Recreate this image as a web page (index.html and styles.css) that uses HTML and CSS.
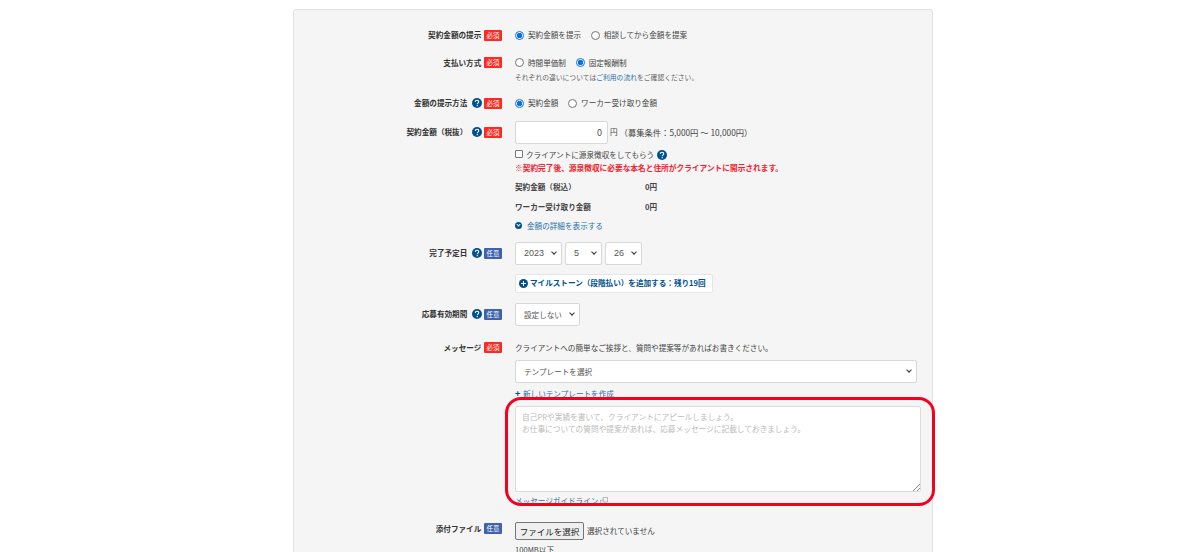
FILE: index.html
```html
<!DOCTYPE html>
<html lang="ja">
<head>
  <meta charset="UTF-8" />
  <title>応募フォーム</title>
  <link rel="stylesheet" href="styles.css">
</head>
<body>
  <svg class="icon-defs" width="0" height="0">
    <symbol id="help" viewBox="0 0 20 20">
      <circle cx="10" cy="10" r="10" fill="#00508f"/>
      <path d="M6.6 7.8C6.7 5.7 8.1 4.6 10.1 4.6c2 0 3.4 1.200 3.400 2.900 0 1.300-.7 2-1.700 2.700-1 .7-1.200 1-1.200 2.100" fill="none" stroke="#fff" stroke-width="2.200"/>
      <circle cx="10.500" cy="15.300" r="1.400" fill="#fff"/>
    </symbol>
  </svg>

  <div id="form-container">
    <div class="row row-first">
      <div class="label">契約金額の提示 <span class="req">必須</span></div>
      <div class="field">
        <label class="radio on">契約金額を提示</label>
        <label class="radio">相談してから金額を提案</label>
      </div>
    </div>

    <div class="row row-pay">
      <div class="label">支払い方式 <span class="req">必須</span></div>
      <div class="field">
        <label class="radio">時間単価制</label>
        <label class="radio on">固定報酬制</label>
        <p class="note">それぞれの違いについては<a href="#">ご利用の流れ</a>をご確認ください。</p>
      </div>
    </div>

    <div class="row row-method">
      <div class="label">金額の提示方法 <svg class="help"><use href="#help"/></svg><span class="req">必須</span></div>
      <div class="field">
        <label class="radio on">契約金額</label>
        <label class="radio">ワーカー受け取り金額</label>
      </div>
    </div>

    <div class="row row-amount">
      <div class="label label-tall">契約金額（税抜） <svg class="help"><use href="#help"/></svg><span class="req">必須</span></div>
      <div class="field">
        <div class="amount-line">
          <div class="amount-input">0</div>
          <span>円</span>
          <span class="range">（募集条件：5,000円 〜 10,000円）</span>
        </div>
        <div class="check-line">
          <span class="checkbox"></span>クライアントに源泉徴収をしてもらう<svg class="help"><use href="#help"/></svg>
        </div>
        <p class="warn">※契約完了後、源泉徴収に必要な本名と住所がクライアントに開示されます。</p>
        <div class="sum-line"><b>契約金額（税込）</b><b>0円</b></div>
        <div class="sum-line sum-next"><b>ワーカー受け取り金額</b><b>0円</b></div>
        <a href="#" class="detail-link"><span class="chev"></span>金額の詳細を表示する</a>
      </div>
    </div>

    <div class="row row-date">
      <div class="label label-tall">完了予定日 <svg class="help"><use href="#help"/></svg><span class="opt">任意</span></div>
      <div class="field">
        <div class="date-line">
          <div class="select num w-year">2023</div>
          <div class="select num w-month">5</div>
          <div class="select num w-day">26</div>
        </div>
        <a href="#" class="milestone"><span class="plus"></span>マイルストーン（段階払い）を追加する：残り19回</a>
      </div>
    </div>

    <div class="row row-limit">
      <div class="label label-tall">応募有効期間 <svg class="help"><use href="#help"/></svg><span class="opt">任意</span></div>
      <div class="field">
        <div class="select w-limit">設定しない</div>
      </div>
    </div>

    <div class="row row-message">
      <div class="label">メッセージ <span class="req">必須</span></div>
      <div class="field">
        <p class="intro">クライアントへの簡単なご挨拶と、質問や提案等があればお書きください。</p>
        <div class="select w-full">テンプレートを選択</div>
        <a href="#" class="new-template"><b>+</b>新しいテンプレートを作成</a>
        <div class="textarea">
          自己PRや実績を書いて、クライアントにアピールしましょう。<br>
          お仕事についての質問や提案があれば、応募メッセージに記載しておきましょう。
          <svg class="grip" viewBox="0 0 8 8"><path d="M8 1L1 8M8 5L5 8" stroke="#888" stroke-width="1"/></svg>
        </div>
        <a href="#" class="guide">メッセージガイドライン<svg class="ext" viewBox="0 0 9 9"><path d="M3.500.5h5v5h-5zM.5 3.500h3M.5 3.500v5h5v-3" fill="none" stroke="#aaa"/></svg></a>
      </div>
    </div>

    <div class="row row-file">
      <div class="label label-file">添付ファイル <span class="opt">任意</span></div>
      <div class="field">
        <div class="file-line"><span class="file-btn">ファイルを選択</span>選択されていません</div>
        <p class="file-note">100MB以下</p>
      </div>
    </div>

    <div class="highlight"></div>
  </div>
</body>
</html>
```

FILE: styles.css
```css
html, body {
  height: 552px;
  overflow: hidden;
}

body {
  margin: 0;
  position: relative;
  background-color: #ffffff;
  color: #444;
  font-family: "Noto Sans CJK JP", "Liberation Sans", sans-serif;
  font-size: 7.6px;
  line-height: 12px;
}

.icon-defs {
  display: block;
  height: 0;
}

a {
  color: #1f70a8;
  text-decoration: none;
}

p {
  margin: 0;
}

#form-container {
  width: 638px;
  height: 700px;
  margin: 9px 0 0 293px;
  background-color: #f5f5f5;
  border: 1px solid #e2e2e2;
  border-radius: 3px;
}

/* ---------- rows ---------- */
.row {
  display: grid;
  grid-template-columns: 208px 1fr;
  column-gap: 13px;
}

.row-first { margin-top: 19px; }
.row-pay { margin-top: 14px; }
.row-method { margin-top: 14px; }
.row-amount { margin-top: 10px; }
.row-date { margin-top: 10px; }
.row-limit { margin-top: 10px; }
.row-message { margin-top: 16px; }
.row-file { margin-top: 15px; }

.label {
  display: flex;
  justify-content: flex-end;
  align-items: center;
  align-self: start;
  height: 12px;
  font-weight: 700;
  color: #333;
  white-space: pre;
}

.label-tall {
  height: 23px;
}

.label-file {
  height: 12px;
  margin-top: 1px;
}

.req, .opt {
  display: inline-block;
  width: 18px;
  height: 11px;
  margin-left: 1px;
  border-radius: 1px;
  font-size: 6.4px;
  line-height: 11px;
  font-weight: 400;
  text-align: center;
  color: #fff;
}

.req { background-color: #ff2a1f; }
.opt { background-color: #3f62ad; }

.help {
  width: 10px;
  height: 10px;
  margin: 0 1px 0 3px;
}

/* ---------- radio ---------- */
.radio {
  display: inline-flex;
  align-items: center;
  margin-right: 8px;
}

.radio::before {
  content: '';
  box-sizing: border-box;
  width: 9px;
  height: 9px;
  margin-right: 4px;
  border: 1px solid #767676;
  border-radius: 50%;
  background-color: #fff;
}

.radio.on::before {
  border: 1px solid #0a6fe0;
  background: radial-gradient(circle, #0a6fe0 0 2.500px, #fff 3px);
}

.note {
  margin-top: 1px;
  font-size: 6.8px;
  color: #666;
}

/* ---------- amount ---------- */
.amount-line {
  display: flex;
  align-items: center;
  gap: 2px;
}

.amount-input {
  box-sizing: border-box;
  width: 93px;
  height: 23px;
  padding-right: 5px;
  border: 1px solid #d8d8d8;
  border-radius: 2px;
  background-color: #fff;
  line-height: 21px;
  font-size: 9px;
  text-align: right;
  color: #555;
}

.range {
  font-size: 8.3px;
}

.check-line {
  display: flex;
  align-items: center;
  margin-top: 5px;
}

.checkbox {
  box-sizing: border-box;
  width: 8px;
  height: 8px;
  margin-right: 3px;
  margin-top: -2px;
  border: 1px solid #767676;
  border-radius: 1px;
  background-color: #fff;
}

.check-line .help {
  margin-left: 3px;
}

.warn {
  margin-top: 1px;
  font-size: 7.7px;
  font-weight: 700;
  color: #f5202e;
}

.sum-line {
  display: grid;
  grid-template-columns: 130px 1fr;
  margin-top: 7px;
}

.sum-next {
  margin-top: 8px;
}

.sum-line b {
  color: #444;
}

.detail-link {
  display: flex;
  align-items: center;
  margin-top: 7px;
}

.chev {
  position: relative;
  width: 7px;
  height: 7px;
  margin-right: 5px;
  border-radius: 50%;
  background-color: #00508f;
}

.chev::after {
  content: '';
  position: absolute;
  left: 2px;
  top: 1px;
  width: 2px;
  height: 2px;
  border-right: 1px solid #fff;
  border-bottom: 1px solid #fff;
  transform: rotate(45deg);
}

/* ---------- selects ---------- */
.select {
  position: relative;
  box-sizing: border-box;
  height: 23px;
  padding-left: 8px;
  border: 1px solid #d8d8d8;
  border-radius: 2px;
  background-color: #fff;
  line-height: 21px;
  font-size: 7.6px;
  color: #555;
}

.select.num {
  font-family: "Liberation Sans", sans-serif;
  font-size: 9px;
}

.select::after {
  content: '';
  position: absolute;
  right: 5px;
  top: 7px;
  width: 3px;
  height: 3px;
  border-right: 1.500px solid #333;
  border-bottom: 1.500px solid #333;
  transform: rotate(45deg);
}

.date-line {
  display: flex;
  gap: 3px;
}

.w-year { width: 47px; }
.w-month { width: 37px; }
.w-day { width: 37px; }
.w-limit { width: 65px; }
.w-full { width: 402px; margin-top: 6px; }

.milestone {
  display: flex;
  align-items: center;
  box-sizing: border-box;
  width: 198px;
  height: 19px;
  margin-top: 9px;
  padding-left: 3px;
  border: 1px solid #e6e6e6;
  border-radius: 2px;
  background-color: #fff;
  font-weight: 700;
  color: #00508f;
}

.plus {
  position: relative;
  width: 9px;
  height: 9px;
  margin-right: 2px;
  border-radius: 50%;
  background-color: #00508f;
}

.plus::before, .plus::after {
  content: '';
  position: absolute;
  background-color: #fff;
}

.plus::before { left: 2px; top: 4px; width: 5px; height: 1px; }
.plus::after { left: 4px; top: 2px; width: 1px; height: 5px; }

/* ---------- message ---------- */
.new-template {
  display: block;
  margin-top: 5px;
  margin-bottom: 6px;
}

.new-template b {
  display: inline-block;
  width: 8px;
  font-size: 9px;
  color: #00508f;
}

.textarea {
  position: relative;
  box-sizing: border-box;
  width: 406px;
  height: 86px;
  padding: 4px 6px;
  border: 1px solid #dcdcdc;
  border-radius: 2px;
  background-color: #fff;
  font-size: 7.7px;
  color: #bbb;
}

.grip {
  position: absolute;
  right: 0;
  bottom: 0;
  width: 8px;
  height: 8px;
}

.guide {
  display: flex;
  align-items: center;
  margin-top: 3px;
}

.ext {
  width: 8px;
  height: 8px;
  margin-left: 2px;
}

/* ---------- file ---------- */
.file-line {
  display: flex;
  align-items: center;
}

.file-btn {
  box-sizing: border-box;
  width: 69px;
  height: 18px;
  margin-right: 3px;
  border: 1px solid #767676;
  border-radius: 2px;
  background-color: #efefef;
  font-size: 8.500px;
  line-height: 16px;
  text-align: center;
  color: #222;
}

.file-note {
  margin-top: 4px;
}

/* ---------- red frame over the textarea ---------- */
.highlight {
  position: absolute;
  left: 505px;
  top: 397px;
  width: 424px;
  height: 103px;
  border: 3.500px solid #f5001e;
  border-radius: 16px;
}
```
